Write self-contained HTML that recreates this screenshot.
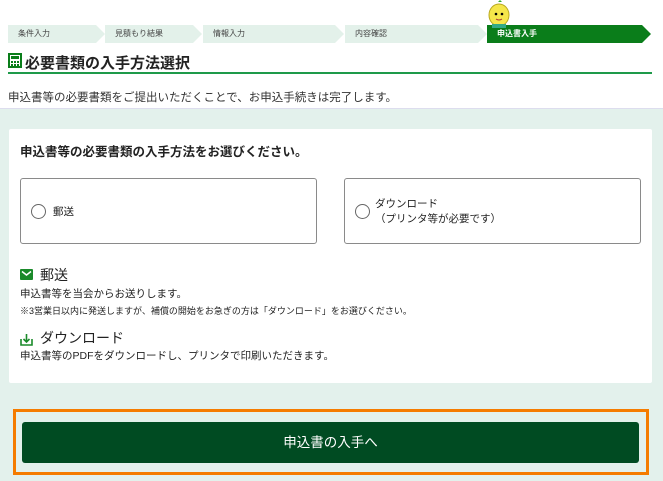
<!DOCTYPE html>
<html><head><meta charset="utf-8"><style>
*{margin:0;padding:0;box-sizing:border-box}
body{width:663px;height:481px;background:#fff;font-family:"Liberation Sans","Noto Sans CJK JP",sans-serif;color:#222;position:relative;overflow:hidden}
.a{position:absolute}
.step{position:absolute;top:25px;height:18px;background:#e3f1ea;font-size:8px;line-height:18px;padding-left:10px;color:#444;clip-path:polygon(0 0,calc(100% - 9px) 0,100% 50%,calc(100% - 9px) 100%,0 100%)}
.box{position:absolute;top:178px;height:66px;border:1px solid #8a8a8a;border-radius:3px;background:#fff}
.rad{position:absolute;left:10px;top:25px;width:15px;height:15px;border:1.5px solid #666;border-radius:50%}
</style></head><body>
<div class="step" style="left:8px;width:97px">条件入力</div>
<div class="step" style="left:105px;width:97px">見積もり結果</div>
<div class="step" style="left:203px;width:141px">情報入力</div>
<div class="step" style="left:345px;width:142px">内容確認</div>
<div class="step" style="left:487px;width:164px;background:#0a7d1a;color:#fff;font-weight:bold">申込書入手</div>
<svg class="a" style="left:484px;top:0" width="30" height="28" viewBox="0 0 30 28"><path d="M14 2 l2 -2 l2 2z" fill="#3a3"/><ellipse cx="15" cy="15" rx="10" ry="11" fill="#f5e64a" stroke="#b9a820"/><circle cx="12" cy="14" r="1.3" fill="#000"/><circle cx="18" cy="14" r="1.3" fill="#000"/><path d="M12 19 q3 2 6 0" stroke="#a33" fill="none"/><rect x="8" y="24" width="14" height="4" fill="#3a8"/></svg>
<svg class="a" style="left:8px;top:53px" width="14" height="15" viewBox="0 0 14 15"><rect x="1" y="1" width="12" height="13" fill="none" stroke="#0a7d1a" stroke-width="2"/><rect x="3" y="3" width="8" height="3" fill="#0a7d1a"/><g fill="#0a7d1a"><rect x="3" y="8" width="2" height="2"/><rect x="6" y="8" width="2" height="2"/><rect x="9" y="8" width="2" height="2"/><rect x="3" y="11" width="2" height="2"/><rect x="6" y="11" width="2" height="2"/><rect x="9" y="11" width="2" height="2"/></g></svg>
<div class="a" style="left:25px;top:52px;font-size:15px;font-weight:bold;color:#222">必要書類の入手方法選択</div>
<div class="a" style="left:8px;top:72px;width:644px;height:2px;background:#1e9a4a"></div>
<div class="a" style="left:8px;top:89px;font-size:11.5px;color:#333">申込書等の必要書類をご提出いただくことで、お申込手続きは完了します。</div>
<div class="a" style="left:0;top:108px;width:663px;height:373px;background:#e3f1ec;border-top:1px solid #dde"></div>
<div class="a" style="left:9px;top:129px;width:643px;height:254px;background:#fff;border-radius:2px"></div>
<div class="a" style="left:20px;top:141px;font-size:12.5px;font-weight:bold;color:#222">申込書等の必要書類の入手方法をお選びください。</div>
<div class="box" style="left:20px;width:297px"><div class="rad"></div><div class="a" style="left:32px;top:25px;font-size:10.5px">郵送</div></div>
<div class="box" style="left:344px;width:297px"><div class="rad"></div><div class="a" style="left:30px;top:18px;font-size:10.5px;line-height:15px">ダウンロード<br>（プリンタ等が必要です）</div></div>
<svg class="a" style="left:20px;top:269px" width="13" height="11" viewBox="0 0 13 11"><rect width="13" height="11" rx="1" fill="#1a8a2a"/><path d="M2 2.5 L6.5 6 L11 2.5" stroke="#fff" stroke-width="1.5" fill="none"/></svg>
<div class="a" style="left:40px;top:265px;font-size:14px">郵送</div>
<div class="a" style="left:20px;top:286px;font-size:10.5px">申込書等を当会からお送りします。</div>
<div class="a" style="left:20px;top:304px;font-size:9px">※3営業日以内に発送しますが、補償の開始をお急ぎの方は「ダウンロード」をお選びください。</div>
<svg class="a" style="left:20px;top:333px" width="13" height="13" viewBox="0 0 13 13"><path d="M1 6 V12 H12 V6" stroke="#1a8a2a" stroke-width="1.6" fill="none"/><path d="M6.5 1 V9 M3.5 6 L6.5 9 L9.5 6" stroke="#1a8a2a" stroke-width="1.6" fill="none"/></svg>
<div class="a" style="left:40px;top:328px;font-size:14px">ダウンロード</div>
<div class="a" style="left:20px;top:348px;font-size:10.5px">申込書等のPDFをダウンロードし、プリンタで印刷いただきます。</div>
<div class="a" style="left:13px;top:409px;width:636px;height:66px;border:3px solid #f57c00"></div>
<div class="a" style="left:22px;top:422px;width:617px;height:41px;background:#004b22;border-radius:3px;color:#fff;font-size:13.5px;text-align:center;line-height:41px">申込書の入手へ</div>
</body></html>
